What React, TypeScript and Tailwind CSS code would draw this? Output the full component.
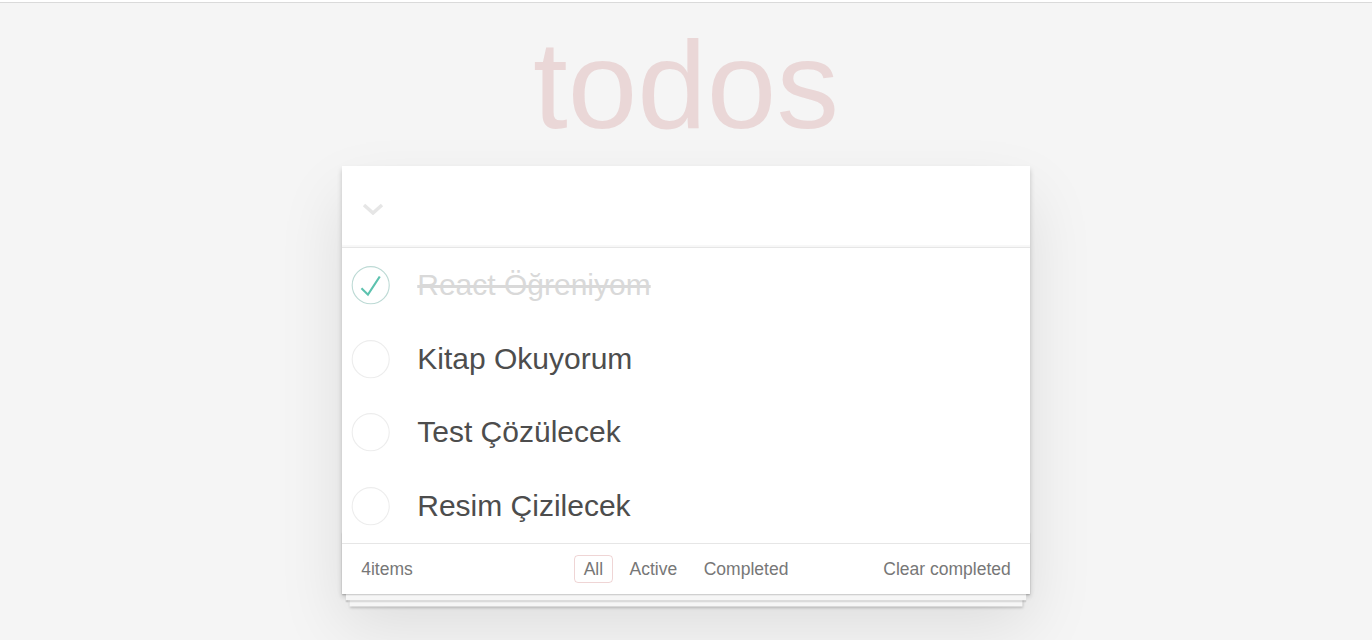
import React, { useState } from "react";

type Todo = { id: number; title: string; completed: boolean };

const initialTodos: Todo[] = [
  { id: 1, title: "React Öğreniyom", completed: true },
  { id: 2, title: "Kitap Okuyorum", completed: false },
  { id: 3, title: "Test Çözülecek", completed: false },
  { id: 4, title: "Resim Çizilecek", completed: false },
];

const ToggleIcon: React.FC<{ checked: boolean }> = ({ checked }) => (
  <svg width="50" height="50" viewBox="-10 -18 100 135" className="shrink-0">
    <circle
      cx="50"
      cy="50"
      r="50"
      fill="none"
      stroke={checked ? "#bddad5" : "#ededed"}
      strokeWidth="3"
    />
    {checked && <path fill="#5dc2af" d="M72 25L42 71 27 56l-4 4 20 20 34-52z" />}
  </svg>
);

const filters = ["All", "Active", "Completed"];

export default function App() {
  const [todos, setTodos] = useState<Todo[]>(initialTodos);
  const [filter, setFilter] = useState("All");

  const toggle = (id: number) =>
    setTodos(todos.map((t) => (t.id === id ? { ...t, completed: !t.completed } : t)));

  return (
    <div className="min-h-screen bg-[#f5f5f5] font-['Liberation_Sans',Arial,sans-serif] text-[#4d4d4d]">
      <div className="mt-[2px] h-px bg-[#dadada]" />

      <div className="mx-auto w-[687.5px]">
        <h1 className="mt-[19px] text-center text-[125px] leading-[125px] font-thin text-[rgba(175,47,47,0.15)]">
          todos
        </h1>

        <section className="relative mt-[19px] bg-white shadow-[0_2.5px_5px_0_rgba(0,0,0,0.2),0_31px_62px_0_rgba(0,0,0,0.1)]">
          {/* header / new todo */}
          <header className="flex h-[81px] items-center pl-[20px] shadow-[inset_0_-2px_1px_rgba(0,0,0,0.03)]">
            <svg width="22" height="12" viewBox="0 0 22 12" className="mt-[4px]">
              <polyline
                points="2,2 11,10 20,2"
                fill="none"
                stroke="#e6e6e6"
                strokeWidth="3.5"
              />
            </svg>
          </header>

          <ul className="border-t border-[#e6e6e6]">
            {todos.map((todo) => (
              <li key={todo.id} className="flex h-[73.75px] items-center">
                <button onClick={() => toggle(todo.id)} className="flex cursor-pointer">
                  <ToggleIcon checked={todo.completed} />
                </button>
                <label
                  className={`ml-[25px] text-[30px] leading-[36px] ${
                    todo.completed ? "text-[#d9d9d9] line-through" : "text-[#4d4d4d]"
                  }`}
                >
                  {todo.title}
                </label>
              </li>
            ))}
          </ul>

          {/* footer */}
          <footer className="relative grid h-[51px] grid-cols-[1fr_auto_1fr] items-center border-t border-[#e6e6e6] px-[19px] text-[17.5px] text-[#777]">
            <div className="pointer-events-none absolute inset-x-0 bottom-0 h-[62px] shadow-[0_1.25px_1.25px_rgba(0,0,0,0.2),0_10px_0_-3.75px_#f6f6f6,0_11.25px_1.25px_-3.75px_rgba(0,0,0,0.2),0_20px_0_-7.5px_#f6f6f6,0_21.25px_2.5px_-7.5px_rgba(0,0,0,0.2)]" />
            <span className="relative">{todos.length}items</span>
            <ul className="relative flex">
              {filters.map((f) => (
                <li key={f}>
                  <a
                    onClick={() => setFilter(f)}
                    className={`mx-[3.75px] block cursor-pointer rounded-[4px] border px-[8.5px] py-[3px] leading-[20px] ${
                      filter === f ? "border-[rgba(175,47,47,0.2)]" : "border-transparent"
                    }`}
                  >
                    {f}
                  </a>
                </li>
              ))}
            </ul>
            <button className="relative justify-self-end cursor-pointer">Clear completed</button>
          </footer>
        </section>
      </div>
    </div>
  );
}
